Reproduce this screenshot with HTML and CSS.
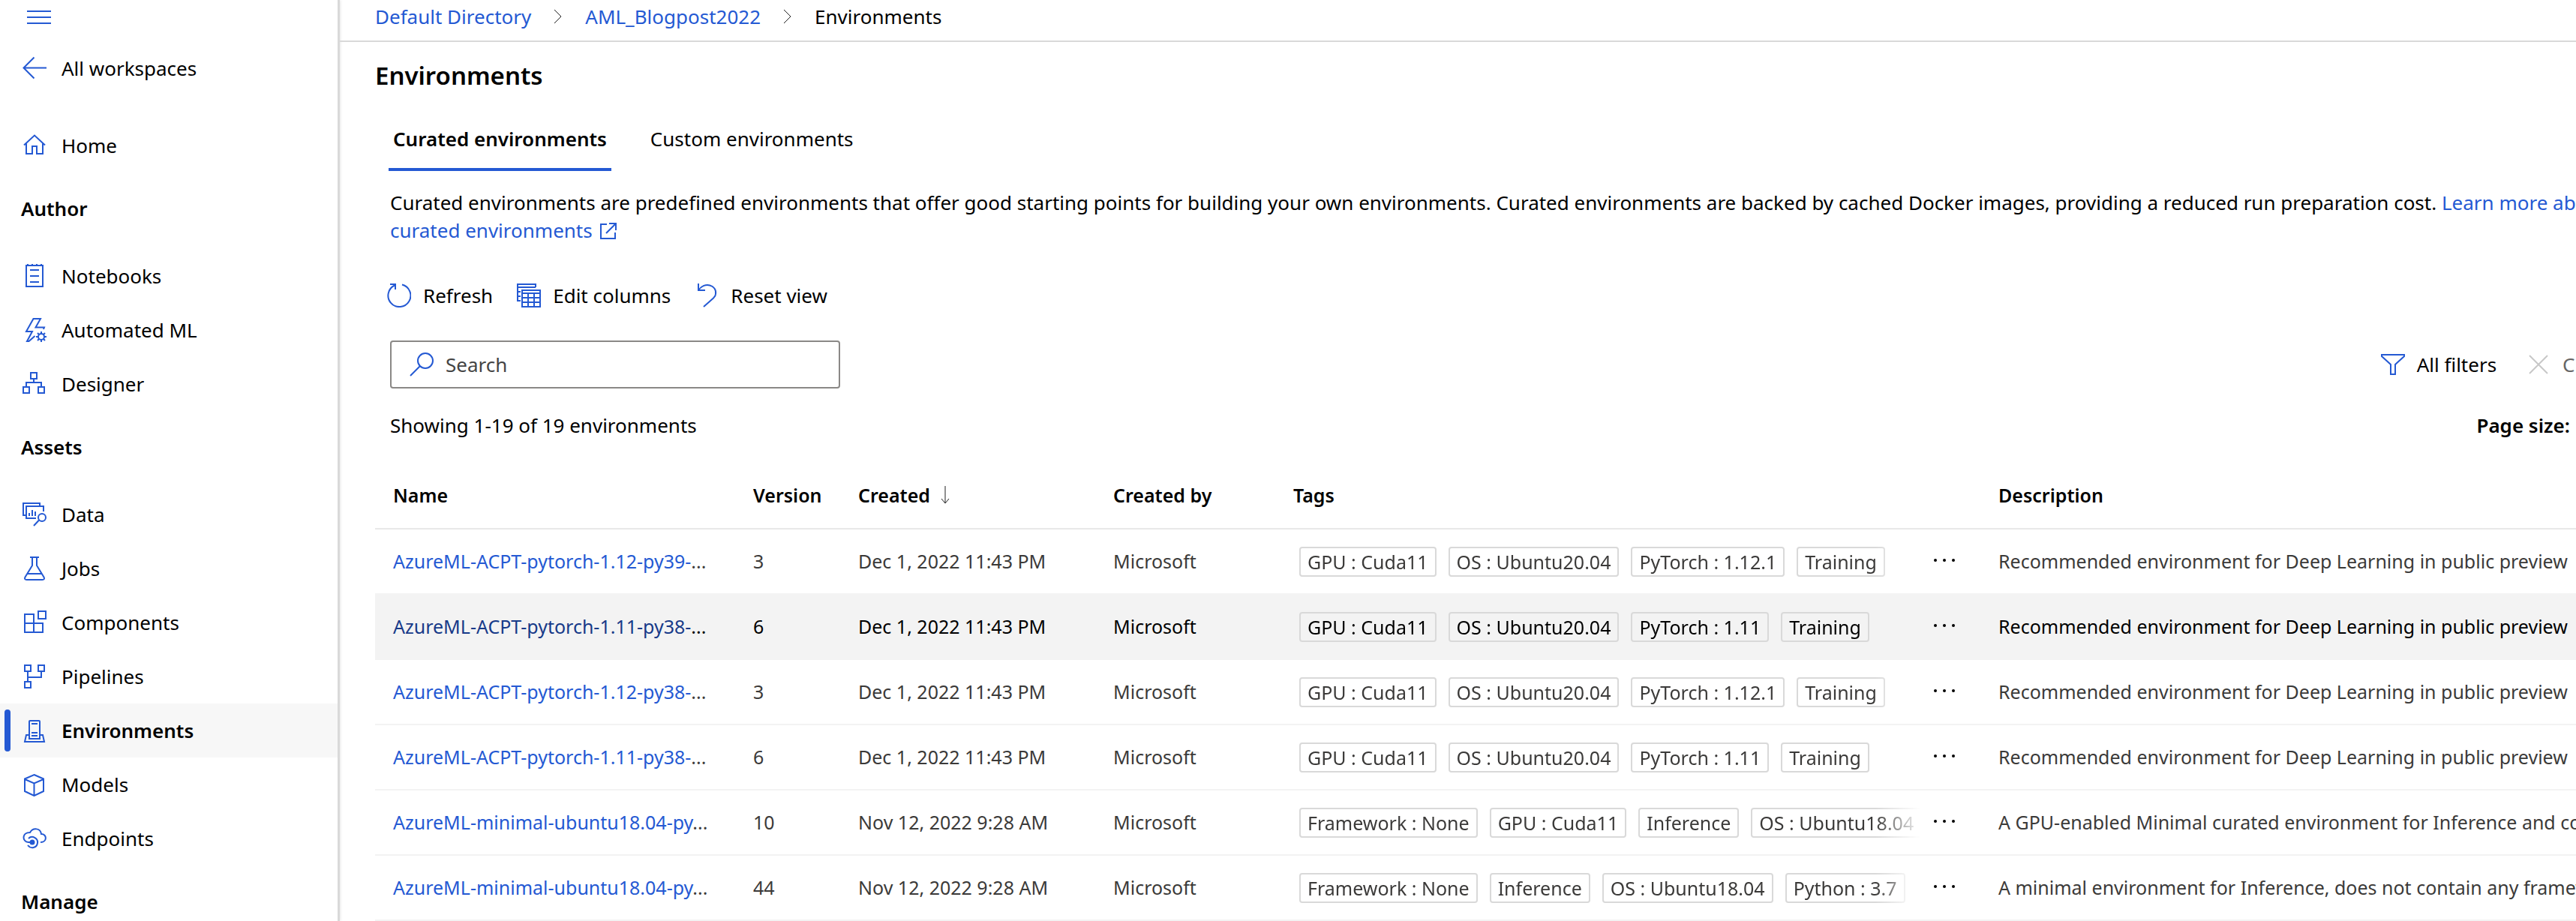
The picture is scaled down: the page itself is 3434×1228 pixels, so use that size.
FILE: index.html
```html
<!DOCTYPE html>
<html lang="en">
<head>
<meta charset="utf-8">
<title>Environments</title>
<link rel="stylesheet" href="styles.css">
</head>
<body>
<div class="app">
  <nav class="sidebar" aria-label="Workspace">
    <button class="menu-toggle" type="button" aria-label="Toggle menu">
      <svg class="icon" viewBox="0 0 32 32"><path d="M0 8h32M0 16h32M0 24h32"/></svg>
    </button>
    <a class="nav-item nav-back" href="#"><svg class="icon" viewBox="0 0 32 32"><path d="M32 15.500H1.500M15.500 1.500L1.500 15.500l14 14"/></svg>All workspaces</a>
    <a class="nav-item" href="#"><svg class="icon" viewBox="0 0 32 32"><path d="M2 15.500L16 2.500l14 13M5 13.500V27h8V17h6v10h8V13.500"/></svg>Home</a>
    <h2 class="nav-heading">Author</h2>
    <a class="nav-item" href="#"><svg class="icon" viewBox="0 0 32 32"><path d="M5 2h22v28H5zM7 0v2M13 0v2M19 0v2M25 0v2M10 8h12M10 16h12M10 24h12"/></svg>Notebooks</a>
    <a class="nav-item" href="#"><svg class="icon" viewBox="0 0 32 32"><path d="M28 15l1-2.500H17.500L24 1h-9.500L5 18h8L6 31h2.500l8-7"/><circle cx="25" cy="25" r="4"/><path d="M25 18v3M25 29v3M18 25h3M29 25h3M20 20l2 2M28 28l2 2M30 20l-2 2M22 28l-2 2"/></svg>Automated ML</a>
    <a class="nav-item" href="#"><svg class="icon" viewBox="0 0 32 32"><path d="M11 1h8v8h-8zM1 20h8v8H1zM21 20h8v8h-8zM15 9v5M5 20v-6h20v6"/></svg>Designer</a>
    <h2 class="nav-heading">Assets</h2>
    <a class="nav-item" href="#"><svg class="icon" viewBox="0 0 32 32"><path d="M5 17H1V1h22v4M28 12V5H5v16h13M9 14v4M13 10v8M17 12v6"/><circle cx="26" cy="20" r="5"/><path d="M22 23.500L15 31"/></svg>Data</a>
    <a class="nav-item" href="#"><svg class="icon" viewBox="0 0 32 32"><path d="M10 1h12M13 1v11L3.500 27.500Q2 31 5.500 31h21q3.500 0 2-3.500L19 12V1M7 23h18"/></svg>Jobs</a>
    <a class="nav-item" href="#"><svg class="icon" viewBox="0 0 32 32"><path d="M3 5h12v24H3zM3 17h24v12H15M27 17v12M21 1h10v10H21z"/></svg>Components</a>
    <a class="nav-item" href="#"><svg class="icon" viewBox="0 0 32 32"><path d="M3 1h8v8H3zM21 1h8v8h-8zM3 23h8v8H3zM7 9v14M7 17h18V9"/></svg>Pipelines</a>
    <a class="nav-item is-active" href="#" aria-current="page"><svg class="icon" viewBox="0 0 32 32"><path d="M9 27V4q0-1 1-1h12q1 0 1 1v23zM12 7h8M12 19h8M12 23h8M9 22H5L3 31h26l-2-9h-4"/></svg>Environments</a>
    <a class="nav-item" href="#"><svg class="icon" viewBox="0 0 32 32"><path d="M15.500 3L28 8.500V25l-12.500 6L3 25V8.500zM3 9l12.500 5.500L28 9M15.500 14.500V31"/></svg>Models</a>
    <a class="nav-item" href="#"><svg class="icon" viewBox="0 0 32 32"><path d="M11 21H8C-1 20-1 8 10 8C14 1 24 2 25 10C33 10 33 21 24 21"/><path d="M8 16C13 11 21 16 20 22C19 29 11 30 7 25"/><circle class="icon-fill" cx="13" cy="21" r="2.500"/></svg>Endpoints</a>
    <h2 class="nav-heading">Manage</h2>
  </nav>

  <main class="main">
    <nav class="breadcrumb" aria-label="Breadcrumb">
      <a href="#">Default Directory</a>
      <svg class="chevron" viewBox="0 0 10 20"><path d="M0 1l9 9-9 9"/></svg>
      <a href="#">AML_Blogpost2022</a>
      <svg class="chevron" viewBox="0 0 10 20"><path d="M0 1l9 9-9 9"/></svg>
      <span>Environments</span>
    </nav>

    <div class="content">
      <h1 class="title">Environments</h1>
      <div class="tabs" role="tablist">
        <button class="tab is-selected" type="button" role="tab" aria-selected="true">Curated environments</button>
        <button class="tab" type="button" role="tab" aria-selected="false">Custom environments</button>
      </div>
      <p class="intro">Curated environments are predefined environments that offer good starting points for building your own environments. Curated environments are backed by cached Docker images, providing a reduced run preparation cost. <a href="#">Learn more about curated environments<svg class="external" viewBox="0 0 22 22"><path d="M9 2H1v19h19v-8M12 1h9v9M21 1L8 14"/></svg></a></p>

      <div class="toolbar">
        <button class="command" type="button"><svg class="icon" viewBox="0 0 32 32"><path d="M20 1.500A15 15 0 1 1 10 2.500M4 1h7v7"/></svg>Refresh</button>
        <button class="command" type="button"><svg class="icon" viewBox="0 0 32 32"><path d="M25 5V1H1v22h4M1 5h24M1 11h4M1 17h4M7 9h24v22H7zM7 13h24M7 19h24M7 25h24M15 13v18M23 13v18"/></svg>Edit columns</button>
        <button class="command" type="button"><svg class="icon" viewBox="0 0 32 32"><path d="M5 0v9h9M5 9C13-3 30 2 28 14q0 3-3 5.500L12 31"/></svg>Reset view</button>
      </div>

      <div class="filters">
        <label class="search"><svg class="icon" viewBox="0 0 32 32"><circle cx="21" cy="11" r="10"/><path d="M14 18L1 31"/></svg><input type="text" placeholder="Search" aria-label="Search"></label>
        <div class="filter-actions">
          <button class="command" type="button"><svg class="icon" viewBox="0 0 32 32"><path d="M1 3h30v2L19 16v13h-6V16L1 5z"/></svg>All filters</button>
          <button class="command" type="button" disabled><svg class="icon" viewBox="0 0 32 32"><path d="M4 4l24 24M28 4L4 28"/></svg>Clear all</button>
        </div>
      </div>

      <div class="summary"><span>Showing 1-19 of 19 environments</span><span class="page-size">Page size:</span></div>

      <table class="grid">
        <colgroup><col class="col-name"><col class="col-version"><col class="col-created"><col class="col-author"><col class="col-tags"><col class="col-menu"><col></colgroup>
        <thead>
          <tr><th scope="col">Name</th><th scope="col">Version</th><th scope="col">Created<svg class="sort" viewBox="0 0 12 24"><path d="M6 0v23M1 17l5 6 5-6"/></svg></th><th scope="col">Created by</th><th scope="col">Tags</th><th scope="col" aria-label="Actions"></th><th scope="col">Description</th></tr>
        </thead>
        <tbody>
          <tr><td><a href="#">AzureML-ACPT-pytorch-1.12-py39-</a>...</td><td>3</td><td>Dec 1, 2022 11:43 PM</td><td>Microsoft</td><td class="tags-cell"><div class="tags"><span class="tag">GPU : Cuda11</span><span class="tag">OS : Ubuntu20.04</span><span class="tag">PyTorch : 1.12.1</span><span class="tag">Training</span></div></td><td class="menu-cell"><button class="more" type="button" aria-label="More actions"><svg viewBox="0 0 28 4"><circle cx="2" cy="2" r="2"/><circle cx="14" cy="2" r="2"/><circle cx="26" cy="2" r="2"/></svg></button></td><td>Recommended environment for Deep Learning in public preview</td></tr>
          <tr class="is-hovered"><td><a href="#">AzureML-ACPT-pytorch-1.11-py38-</a>...</td><td>6</td><td>Dec 1, 2022 11:43 PM</td><td>Microsoft</td><td class="tags-cell"><div class="tags"><span class="tag">GPU : Cuda11</span><span class="tag">OS : Ubuntu20.04</span><span class="tag">PyTorch : 1.11</span><span class="tag">Training</span></div></td><td class="menu-cell"><button class="more" type="button" aria-label="More actions"><svg viewBox="0 0 28 4"><circle cx="2" cy="2" r="2"/><circle cx="14" cy="2" r="2"/><circle cx="26" cy="2" r="2"/></svg></button></td><td>Recommended environment for Deep Learning in public preview</td></tr>
          <tr><td><a href="#">AzureML-ACPT-pytorch-1.12-py38-</a>...</td><td>3</td><td>Dec 1, 2022 11:43 PM</td><td>Microsoft</td><td class="tags-cell"><div class="tags"><span class="tag">GPU : Cuda11</span><span class="tag">OS : Ubuntu20.04</span><span class="tag">PyTorch : 1.12.1</span><span class="tag">Training</span></div></td><td class="menu-cell"><button class="more" type="button" aria-label="More actions"><svg viewBox="0 0 28 4"><circle cx="2" cy="2" r="2"/><circle cx="14" cy="2" r="2"/><circle cx="26" cy="2" r="2"/></svg></button></td><td>Recommended environment for Deep Learning in public preview</td></tr>
          <tr><td><a href="#">AzureML-ACPT-pytorch-1.11-py38-</a>...</td><td>6</td><td>Dec 1, 2022 11:43 PM</td><td>Microsoft</td><td class="tags-cell"><div class="tags"><span class="tag">GPU : Cuda11</span><span class="tag">OS : Ubuntu20.04</span><span class="tag">PyTorch : 1.11</span><span class="tag">Training</span></div></td><td class="menu-cell"><button class="more" type="button" aria-label="More actions"><svg viewBox="0 0 28 4"><circle cx="2" cy="2" r="2"/><circle cx="14" cy="2" r="2"/><circle cx="26" cy="2" r="2"/></svg></button></td><td>Recommended environment for Deep Learning in public preview</td></tr>
          <tr><td><a href="#">AzureML-minimal-ubuntu18.04-py</a>...</td><td>10</td><td>Nov 12, 2022 9:28 AM</td><td>Microsoft</td><td class="tags-cell"><div class="tags"><span class="tag">Framework : None</span><span class="tag">GPU : Cuda11</span><span class="tag">Inference</span><span class="tag">OS : Ubuntu18.04</span></div></td><td class="menu-cell"><button class="more" type="button" aria-label="More actions"><svg viewBox="0 0 28 4"><circle cx="2" cy="2" r="2"/><circle cx="14" cy="2" r="2"/><circle cx="26" cy="2" r="2"/></svg></button></td><td>A GPU-enabled Minimal curated environment for Inference and contains</td></tr>
          <tr><td><a href="#">AzureML-minimal-ubuntu18.04-py</a>...</td><td>44</td><td>Nov 12, 2022 9:28 AM</td><td>Microsoft</td><td class="tags-cell"><div class="tags"><span class="tag">Framework : None</span><span class="tag">Inference</span><span class="tag">OS : Ubuntu18.04</span><span class="tag">Python : 3.7</span></div></td><td class="menu-cell"><button class="more" type="button" aria-label="More actions"><svg viewBox="0 0 28 4"><circle cx="2" cy="2" r="2"/><circle cx="14" cy="2" r="2"/><circle cx="26" cy="2" r="2"/></svg></button></td><td>A minimal environment for Inference, does not contain any frameworks</td></tr>
        </tbody>
      </table>
    </div>
  </main>
</div>
</body>
</html>
```
FILE: styles.css
```css
* { box-sizing: border-box; }

body {
  margin: 0;
  color: #000;
  background: #fff;
  font-family: "Noto Sans", "Open Sans", sans-serif;
  font-size: 26px;
  line-height: 36px;
}

a { color: #2459d3; text-decoration: none; }

button {
  padding: 0;
  border: 0;
  background: none;
  color: inherit;
  font: inherit;
}

svg { display: block; flex: none; fill: none; stroke: #2459d3; stroke-width: 2; }

.icon { width: 32px; height: 32px; }
.icon-fill { fill: #2459d3; }

.app { display: flex; height: 100vh; overflow: hidden; }

/* Sidebar */
.sidebar {
  flex: none;
  width: 453px;
  border-right: 3px solid #d9d9d9;
  box-shadow: 0 0 4px rgba(0, 0, 0, 0.15);
}

.menu-toggle { display: block; height: 55px; padding: 0 36px 9px; }

.nav-item {
  display: flex;
  align-items: center;
  gap: 20px;
  height: 72px;
  padding-left: 30px;
  color: #000;
}

.nav-back { margin-bottom: 31px; }

.nav-item.is-active {
  padding-left: 6px;
  background: #f7f7f7;
  font-weight: 600;
}

.nav-item.is-active::before {
  content: "";
  width: 8px;
  height: 56px;
  margin-right: -4px;
  border-radius: 4px;
  background: #2459d3;
}

.nav-heading {
  height: 102px;
  margin: 0;
  padding: 30px 28px;
  font-size: 26px;
  font-weight: 600;
}

/* Main column: the content runs on past the right edge of the window */
.main { flex: 1; min-width: 0; }

.breadcrumb {
  display: flex;
  align-items: center;
  gap: 31px;
  height: 56px;
  padding: 0 47px 10px;
  border-bottom: 2px solid #d9d9d9;
}

.chevron { width: 10px; height: 20px; stroke: #222; stroke-width: 1; }

.content { width: calc(100% + 72px); padding: 23px 0 0 47px; }

.title { margin: 0 0 20px; font-size: 33px; font-weight: 600; line-height: 44px; }

.tabs { display: flex; gap: 46px; padding-left: 18px; }

.tab { padding: 24px 6px 21px; border-bottom: 4px solid transparent; }

.tab.is-selected { border-color: #2459d3; font-weight: 600; }

.intro { margin: 24px 0 0; padding-left: 20px; line-height: 37px; }

.external { display: inline-block; width: 22px; height: 22px; margin-left: 10px; vertical-align: -2px; }

.toolbar { display: flex; gap: 32px; margin-top: 52px; padding-left: 16px; }

.command { display: flex; align-items: center; gap: 16px; height: 32px; }

.command:disabled { color: #666; }
.command:disabled svg { stroke: #c8c8c8; }

.filters {
  display: flex;
  align-items: center;
  justify-content: space-between;
  margin-top: 44px;
  padding-left: 20px;
}

.search {
  display: flex;
  align-items: center;
  gap: 16px;
  width: 600px;
  height: 64px;
  padding: 0 24px;
  border: 2px solid #8a8886;
  border-radius: 4px;
}

.search input {
  flex: 1;
  min-width: 0;
  padding: 0;
  border: 0;
  outline: 0;
  background: none;
  font: inherit;
}

.search input::placeholder { color: #444; opacity: 1; }

.filter-actions { display: flex; gap: 40px; margin-right: -8px; }

.summary {
  display: flex;
  justify-content: space-between;
  margin-top: 31px;
  padding: 0 80px 0 20px;
}

.page-size { font-weight: 600; }

/* Environment table */
.grid {
  width: 100%;
  margin-top: 31px;
  border-collapse: separate;
  border-spacing: 0;
  table-layout: fixed;
  font-size: 25px;
}

.col-name { width: 480px; }
.col-version { width: 140px; }
.col-created { width: 340px; }
.col-author { width: 240px; }
.col-tags { width: 860px; }
.col-menu { width: 80px; }

.grid th,
.grid td {
  padding: 0 0 0 24px;
  overflow: hidden;
  text-align: left;
  text-overflow: ellipsis;
  white-space: nowrap;
}

.grid th { height: 90px; border-bottom: 2px solid #e8e8e8; font-weight: 600; }

.grid td { height: 87px; padding-bottom: 2px; border-bottom: 2px solid #f3f3f3; color: #3b3a39; }

.is-hovered td { background: #f3f3f3; color: #000; }
.is-hovered a { color: #173a89; }

.sort {
  display: inline-block;
  width: 12px;
  height: 24px;
  margin-left: 14px;
  vertical-align: -2px;
  stroke: #222;
  stroke-width: 1;
}

.grid .tags-cell { padding: 0 0 0 32px; }

.tags {
  display: flex;
  gap: 16px;
  overflow: hidden;
  -webkit-mask-image: linear-gradient(to left, transparent, #000 60px);
  mask-image: linear-gradient(to left, transparent, #000 60px);
}

.tag {
  flex: none;
  height: 40px;
  padding: 0 9px;
  border: 2px solid #d9d9d9;
  border-radius: 4px;
}

.grid .menu-cell { padding: 0 0 0 18px; }

.more { display: block; padding: 16px 0 20px; }
.more svg { width: 28px; height: 4px; fill: #000; stroke: none; }
```
